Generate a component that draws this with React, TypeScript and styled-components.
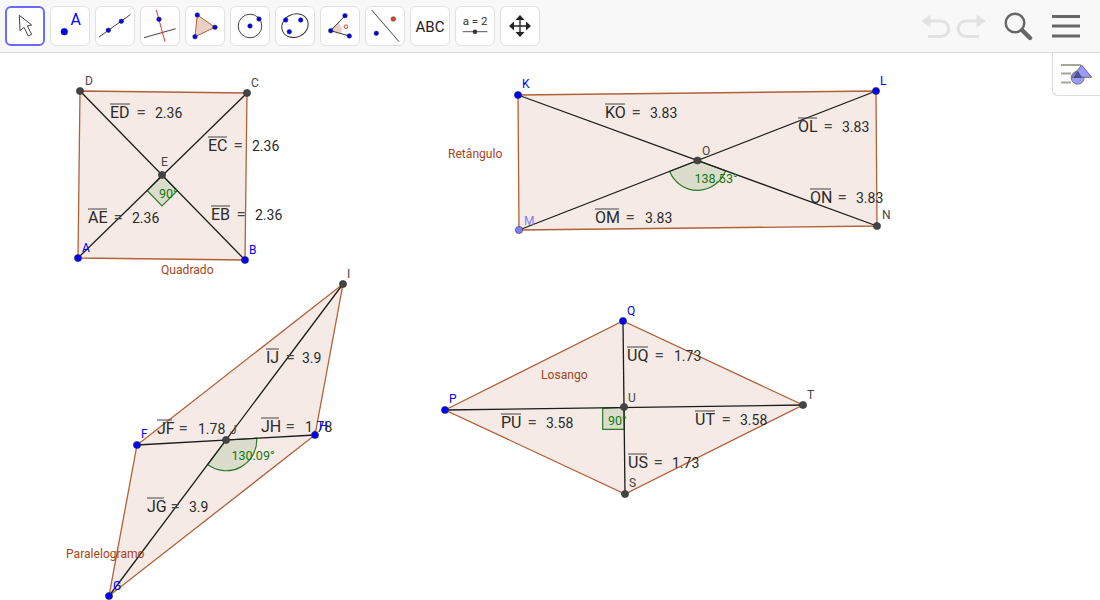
import React from "react";
import styled, { createGlobalStyle } from "styled-components";

const Global = createGlobalStyle`
  html, body { margin: 0; padding: 0; background: #fff; overflow: hidden; }
  body { font-family: Roboto, "Liberation Sans", sans-serif; }
`;

const Page = styled.div`
  position: relative;
  width: 1100px;
  height: 600px;
  display: flex;
  flex-direction: column;
  overflow: hidden;
`;
const Toolbar = styled.header`
  display: flex;
  align-items: flex-start;
  height: 52px;
  flex: none;
  box-sizing: content-box;
  background: #f8f8f8;
  border-bottom: 1px solid #dcdcdc;
`;
const ToolGroup = styled.div`
  display: flex;
  gap: 5px;
  padding: 6px 0 0 5px;
`;
const ToolButton = styled.div<{ $active?: boolean }>`
  width: 40px;
  height: 40px;
  box-sizing: border-box;
  flex: none;
  background: #fff;
  border-radius: 6px;
  border: ${(p) => (p.$active ? "2px solid #6a6aff" : "1px solid #e2e2e2")};
  display: flex;
  align-items: center;
  justify-content: center;
  svg { display: block; flex: none; }
`;
const Actions = styled.div`
  margin-left: auto;
  padding: 11px 20px 0 0;
  display: flex;
  align-items: flex-start;
`;
const Action = styled.svg<{ $left: number }>`
  display: block;
  height: 30px;
  margin-left: ${(p) => p.$left}px;
`;
const StyleToggle = styled.div`
  position: absolute;
  top: 53px;
  right: 0;
  width: 48px;
  height: 43px;
  box-sizing: border-box;
  background: #fff;
  border-left: 1px solid #dcdcdc;
  border-bottom: 1px solid #dcdcdc;
  border-bottom-left-radius: 6px;
  svg { display: block; }
`;
const Canvas = styled.svg`
  display: block;
  flex: none;
  width: 1100px;
  height: 547px;
`;
const Shape = styled.polygon`
  fill: rgba(153, 51, 0, 0.1);
  stroke: #b0613a;
  stroke-width: 1.3;
`;
const Diagonal = styled.line`
  stroke: #1c1c1c;
  stroke-width: 1.3;
`;
const AngleMark = styled.path`
  fill: rgba(0, 100, 0, 0.1);
  stroke: #2b7a2b;
  stroke-width: 1.2;
`;
const Dot = styled.circle<{ $tone: string }>`
  fill: ${(p) => (p.$tone === "blue" ? "#0000ff" : p.$tone === "light" ? "#7d7dff" : "#444444")};
  stroke: #333;
  stroke-width: 0.6;
`;
const PointName = styled.text<{ $tone: string }>`
  font-family: Roboto, "Liberation Sans", sans-serif;
  font-size: 12px;
  fill: ${(p) => (p.$tone === "blue" ? "#0000ff" : p.$tone === "light" ? "#7d7dff" : "#444444")};
`;
const MeasureText = styled.text`
  font-family: Roboto, "Liberation Sans", sans-serif;
  font-size: 14px;
  fill: #2a2a2a;
`;
const MeasureName = styled(MeasureText)`
  font-size: 16px;
`;
const MeasureEquals = styled(MeasureText)`
  font-size: 17px;
  fill: #444;
`;
const Bar = styled.line`
  stroke: #444;
  stroke-width: 1;
`;
const AngleText = styled.text`
  font-family: Roboto, "Liberation Sans", sans-serif;
  font-size: 12.5px;
  fill: #0f7a0f;
`;
const Caption = styled.text`
  font-family: Roboto, "Liberation Sans", sans-serif;
  font-size: 12.1px;
  fill: #a3461c;
`;
const IconText = styled.text<{ $size: number; $fill: string }>`
  font-family: Roboto, "Liberation Sans", sans-serif;
  font-size: ${(p) => p.$size}px;
  fill: ${(p) => p.$fill};
`;

type Pt = [number, number];
type Tone = "blue" | "dark" | "light";

const IconDot = ({ x, y, r = 2.3, c = "#0000ff" }: { x: number; y: number; r?: number; c?: string }) => (
  <circle cx={x} cy={y} r={r} fill={c} stroke="#333" strokeWidth={0.5} />
);

const Ic = ({ children }: { children: React.ReactNode }) => (
  <svg width="40" height="40" viewBox="0 0 40 40">{children}</svg>
);

const tools: React.ReactNode[] = [
  <svg width="40" height="40" viewBox="2 2 40 40" key="a">
    <path d="M16.3 11.3 L17 26.7 L21 23.3 L25.3 32 L28.7 30.3 L24.3 22 L28.7 21 Z" fill="#fff" stroke="#444" strokeWidth="1" strokeLinejoin="round" />
  </svg>,
  <Ic key="b">
    <IconDot x={14.3} y={25.7} r={3.4} />
    <IconText x={20.5} y={19} $size={16} $fill="#0000ff">A</IconText>
  </Ic>,
  <Ic key="c">
    <line x1="4" y1="31" x2="35.5" y2="8.5" stroke="#444" strokeWidth="1" />
    <IconDot x={13.3} y={24.3} />
    <IconDot x={26.3} y={15.3} />
  </Ic>,
  <Ic key="d">
    <line x1="4" y1="31.7" x2="35.7" y2="22.7" stroke="#444" strokeWidth="1" />
    <line x1="16.3" y1="4" x2="25" y2="35.7" stroke="#e33" strokeWidth="1" />
    <IconDot x={19} y={13.3} />
  </Ic>,
  <Ic key="e">
    <polygon points="12.3,9 30,21.3 10,30.7" fill="#ecd0c6" stroke="#b0613a" strokeWidth="1" />
    <IconDot x={12.3} y={9} />
    <IconDot x={30} y={21.3} />
    <IconDot x={10} y={30.7} />
  </Ic>,
  <Ic key="f">
    <circle cx="20" cy="20" r="11.8" fill="none" stroke="#444" strokeWidth="1" />
    <IconDot x={20} y={20} />
    <IconDot x={29} y={13} />
  </Ic>,
  <Ic key="g">
    <ellipse cx="20" cy="19.7" rx="13.5" ry="11.5" transform="rotate(-25 20 19.7)" fill="none" stroke="#333" strokeWidth="1" />
    <IconDot x={10.7} y={14} />
    <IconDot x={25.7} y={14} />
    <IconDot x={14.3} y={25.7} />
  </Ic>,
  <Ic key="h">
    <path d="M10.7 24.7 L18 16.4 A11 11 0 0 1 21.5 27 Z" fill="#ecd0c6" stroke="none" />
    <line x1="10.7" y1="24.7" x2="25" y2="9.7" stroke="#333" strokeWidth="1" />
    <line x1="10.7" y1="24.7" x2="29.3" y2="30" stroke="#333" strokeWidth="1" />
    <IconDot x={10.7} y={24.7} />
    <IconDot x={25} y={9.7} />
    <IconDot x={29.3} y={30} />
    <circle cx="26" cy="20.7" r="1.8" fill="none" stroke="#e33" strokeWidth="1" />
  </Ic>,
  <Ic key="i">
    <line x1="6.7" y1="4" x2="34" y2="35.7" stroke="#444" strokeWidth="1" />
    <IconDot x={11.3} y={27.3} />
    <IconDot x={28.3} y={13} c="#e8402a" />
  </Ic>,
  <Ic key="j">
    <IconText x={20} y={25.5} $size={15} $fill="#222" textAnchor="middle">ABC</IconText>
  </Ic>,
  <Ic key="k">
    <IconText x={20} y={19} $size={11.5} $fill="#333" textAnchor="middle">a = 2</IconText>
    <line x1="7.7" y1="25.7" x2="32.3" y2="25.7" stroke="#555" strokeWidth="1" />
    <circle cx="20" cy="25.7" r="2.2" fill="#333" />
  </Ic>,
  <Ic key="l">
    <path d="M20 11 V29 M11 20 H29" stroke="#222" strokeWidth="1.3" />
    <path d="M20 9 L24.5 14 H15.5 Z M20 31 L24.5 26 H15.5 Z M9 20 L14 15.5 V24.5 Z M31 20 L26 15.5 V24.5 Z" fill="#222" />
  </Ic>,
];

const Point = ({ at, tone = "dark" }: { at: Pt; tone?: Tone }) => (
  <Dot cx={at[0]} cy={at[1]} r={3.6} $tone={tone} />
);

const labels: { t: string; x: number; y: number; tone: Tone }[] = [
  { t: "D", x: 85, y: 85, tone: "dark" },
  { t: "C", x: 251, y: 87, tone: "dark" },
  { t: "E", x: 161, y: 166, tone: "dark" },
  { t: "A", x: 82, y: 252, tone: "blue" },
  { t: "B", x: 249, y: 254, tone: "blue" },
  { t: "K", x: 522, y: 88, tone: "blue" },
  { t: "L", x: 880, y: 85, tone: "blue" },
  { t: "M", x: 524, y: 225, tone: "light" },
  { t: "N", x: 882, y: 219, tone: "dark" },
  { t: "O", x: 702, y: 155, tone: "dark" },
  { t: "I", x: 347, y: 278, tone: "dark" },
  { t: "F", x: 141, y: 438, tone: "blue" },
  { t: "H", x: 319, y: 430, tone: "blue" },
  { t: "J", x: 230, y: 434, tone: "dark" },
  { t: "G", x: 113, y: 590, tone: "blue" },
  { t: "P", x: 449, y: 403, tone: "blue" },
  { t: "Q", x: 627, y: 315, tone: "blue" },
  { t: "T", x: 807, y: 399, tone: "dark" },
  { t: "U", x: 628, y: 402, tone: "dark" },
  { t: "S", x: 629, y: 487, tone: "dark" },
];

const measures: { n: string; x: number; w: number; y: number; v: string; vx: number }[] = [
  { n: "ED", x: 110, w: 20, y: 118, v: "2.36", vx: 155 },
  { n: "EC", x: 208, w: 19, y: 151, v: "2.36", vx: 252 },
  { n: "AE", x: 88, w: 19, y: 223, v: "2.36", vx: 132 },
  { n: "EB", x: 211, w: 19, y: 220, v: "2.36", vx: 255 },
  { n: "KO", x: 605, w: 20, y: 118, v: "3.83", vx: 650 },
  { n: "OL", x: 798, w: 19, y: 132, v: "3.83", vx: 842 },
  { n: "ON", x: 810, w: 21, y: 203, v: "3.83", vx: 856 },
  { n: "OM", x: 595, w: 24, y: 223, v: "3.83", vx: 645 },
  { n: "IJ", x: 266, w: 13, y: 363, v: "3.9", vx: 302 },
  { n: "JF", x: 157, w: 15, y: 434, v: "1.78", vx: 198 },
  { n: "JH", x: 261, w: 18, y: 432, v: "1.78", vx: 305 },
  { n: "JG", x: 147, w: 17, y: 512, v: "3.9", vx: 189 },
  { n: "UQ", x: 627, w: 21, y: 361, v: "1.73", vx: 674 },
  { n: "PU", x: 501, w: 20, y: 428, v: "3.58", vx: 546 },
  { n: "UT", x: 695, w: 20, y: 425, v: "3.58", vx: 740 },
  { n: "US", x: 628, w: 19, y: 468, v: "1.73", vx: 672 },
];

const Measure = ({ n, x, w, y, v, vx }: (typeof measures)[number]) => (
  <g>
    <Bar x1={x} x2={x + w} y1={y - 14} y2={y - 14} />
    <MeasureName x={x} y={y}>{n}</MeasureName>
    <MeasureEquals x={x + w + 6.5} y={y}>=</MeasureEquals>
    <MeasureText x={vx} y={y}>{v}</MeasureText>
  </g>
);

const A: Pt = [78, 258], B: Pt = [245, 260], C: Pt = [247, 93], D: Pt = [80, 91], E: Pt = [162, 175];
const K: Pt = [518, 95], L: Pt = [876, 91], N: Pt = [877, 226], M: Pt = [519, 230], O: Pt = [697.5, 160.5];
const F: Pt = [137, 445], I: Pt = [343, 284], H: Pt = [315, 435], G: Pt = [109, 596], J: Pt = [226, 440];
const P: Pt = [445, 410], Q: Pt = [623, 321], T: Pt = [803, 405], S: Pt = [625, 494], U: Pt = [624, 407];

const poly = (...p: Pt[]) => p.map((q) => q.join(",")).join(" ");
const Seg = ({ a, b }: { a: Pt; b: Pt }) => <Diagonal x1={a[0]} y1={a[1]} x2={b[0]} y2={b[1]} />;

export default function App() {
  return (
    <Page>
      <Global />
      <Toolbar>
        <ToolGroup>
          {tools.map((icon, i) => (
            <ToolButton key={i} $active={i === 0}>{icon}</ToolButton>
          ))}
        </ToolGroup>
        <Actions>
          <Action $left={0} width="30" viewBox="0 0 30 30" fill="none" stroke="#e2e2e2" strokeWidth="3">
            <path d="M5 10 H21 A7.5 7.5 0 0 1 21 25.5 H8" />
            <path d="M2 10 L10 4.5 V15.5 Z" fill="#e2e2e2" strokeWidth="1" />
          </Action>
          <Action $left={7} width="30" viewBox="0 0 30 30" fill="none" stroke="#e2e2e2" strokeWidth="3">
            <path d="M25 10 H9 A7.5 7.5 0 0 0 9 25.5 H22" />
            <path d="M28 10 L20 4.5 V15.5 Z" fill="#e2e2e2" strokeWidth="1" />
          </Action>
          <Action $left={16} width="30" viewBox="0 0 30 30" fill="none" stroke="#666">
            <circle cx="12" cy="12" r="9.3" strokeWidth="2.4" />
            <path d="M19 19 L27 27" strokeWidth="4.4" strokeLinecap="round" />
          </Action>
          <Action $left={19} width="28" viewBox="0 0 28 30" fill="none" stroke="#666" strokeWidth="3">
            <path d="M0 5.5 H28 M0 15 H28 M0 25 H28" />
          </Action>
        </Actions>
      </Toolbar>
      <StyleToggle>
        <svg width="47" height="42" viewBox="1053 53 47 42">
          <path d="M1061 65 H1081 M1061 73.5 H1071 M1061 82.5 H1071" stroke="#aaa59a" strokeWidth="2" />
          <circle cx="1077.7" cy="77.7" r="6.5" fill="#9a9aff" stroke="#666" strokeWidth="0.8" />
          <polygon points="1081.7,65 1091.7,77.3 1071.7,77.3" fill="#9a9aff" stroke="#555" strokeWidth="0.8" />
          <polygon points="1077.7,71.5 1081.5,77.3 1074,77.3" fill="#5050b0" stroke="#333" strokeWidth="0.6" />
        </svg>
      </StyleToggle>
      <Canvas viewBox="0 53 1100 547">
        <Shape points={poly(A, B, C, D)} />
        <Shape points={poly(K, L, N, M)} />
        <Shape points={poly(F, I, H, G)} />
        <Shape points={poly(P, Q, T, S)} />

        <AngleMark d="M162 175 L147.3 190.7 L162 206 L177.3 190.7 Z" />
        <AngleMark d="M697.5 160.5 L669.6 171.3 A30 30 0 0 0 725.6 170.8 Z" />
        <AngleMark d="M226 440 L207.6 464.6 A30.7 30.7 0 0 0 256.7 438.2 Z" />
        <AngleMark d="M624 407.5 L602.7 408.3 L602.7 429.3 L624.3 429.3 Z" />

        <Seg a={A} b={C} />
        <Seg a={D} b={B} />
        <Seg a={K} b={N} />
        <Seg a={M} b={L} />
        <Seg a={F} b={H} />
        <Seg a={G} b={I} />
        <Seg a={P} b={T} />
        <Seg a={Q} b={S} />

        {measures.map((m) => (
          <Measure key={m.n} {...m} />
        ))}

        <AngleText x={159} y={198}>90°</AngleText>
        <AngleText x={694.5} y={183}>138.53°</AngleText>
        <AngleText x={231.5} y={460}>130.09°</AngleText>
        <AngleText x={608} y={425}>90°</AngleText>

        <Caption x={161} y={274}>Quadrado</Caption>
        <Caption x={448} y={158}>Retângulo</Caption>
        <Caption x={66} y={558}>Paralelogramo</Caption>
        <Caption x={541} y={379}>Losango</Caption>

        <Point at={A} tone="blue" />
        <Point at={B} tone="blue" />
        <Point at={C} />
        <Point at={D} />
        <Point at={E} />
        <Point at={K} tone="blue" />
        <Point at={L} tone="blue" />
        <Point at={M} tone="light" />
        <Point at={N} />
        <Point at={O} />
        <Point at={F} tone="blue" />
        <Point at={H} tone="blue" />
        <Point at={G} tone="blue" />
        <Point at={I} />
        <Point at={J} />
        <Point at={P} tone="blue" />
        <Point at={Q} tone="blue" />
        <Point at={T} />
        <Point at={S} />
        <Point at={U} />

        {labels.map((l) => (
          <PointName key={l.t} x={l.x} y={l.y} $tone={l.tone}>{l.t}</PointName>
        ))}
      </Canvas>
    </Page>
  );
}
